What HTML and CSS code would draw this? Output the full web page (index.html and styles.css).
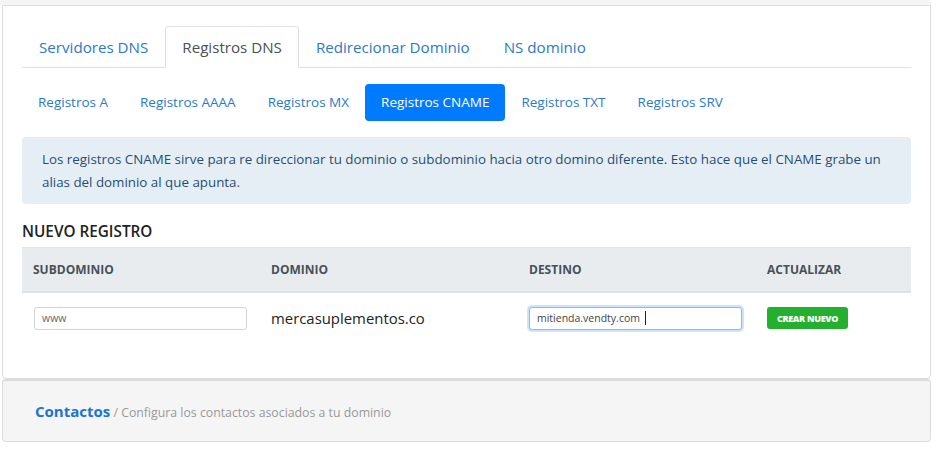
FILE: index.html
```html
<!DOCTYPE html>
<html lang="es">
<head>
<meta charset="utf-8">
<link rel="stylesheet" href="styles.css">
</head>
<body>
<div class="topstrip"></div>
<div class="card">
  <ul class="tabs">
    <li class="tab">Servidores DNS</li>
    <li class="tab active">Registros DNS</li>
    <li class="tab">Redirecionar Dominio</li>
    <li class="tab">NS dominio</li>
  </ul>
  <ul class="pills">
    <li class="pill">Registros A</li>
    <li class="pill">Registros AAAA</li>
    <li class="pill">Registros MX</li>
    <li class="pill active">Registros CNAME</li>
    <li class="pill">Registros TXT</li>
    <li class="pill">Registros SRV</li>
  </ul>
  <div class="alert">Los registros CNAME sirve para re direccionar tu dominio o subdominio hacia otro domino diferente. Esto hace que el CNAME grabe un alias del dominio al que apunta.</div>
  <h3 class="title">NUEVO REGISTRO</h3>
  <table class="grid">
    <thead>
      <tr><th class="c1">SUBDOMINIO</th><th class="c2">DOMINIO</th><th class="c3">DESTINO</th><th class="c4">ACTUALIZAR</th></tr>
    </thead>
    <tbody>
      <tr>
        <td><input class="field" type="text" value="www"></td>
        <td class="domain">mercasuplementos.co</td>
        <td><div class="field focus">mitienda.vendty.com <span class="caret"></span></div></td>
        <td><button class="btn">CREAR NUEVO</button></td>
      </tr>
    </tbody>
  </table>
</div>
<div class="card2">
  <span class="ctitle">Contactos</span><span class="csub"> / Configura los contactos asociados a tu dominio</span>
</div>
</body>
</html>
```
FILE: styles.css
```css
* { box-sizing: border-box; }
body {
  margin: 0;
  background: #fff;
  font-family: "Open Sans", "Noto Sans", sans-serif;
  color: #212529;
}
.topstrip {
  height: 5px;
  width: 931px;
  background: #f5f5f5;
}
.card {
  margin-left: 2px;
  width: 929px;
  height: 374px;
  border: 1px solid #dcdcdc;
  border-radius: 0 0 4px 4px;
  padding: 20px 19px 0 19px;
}
.tabs {
  list-style: none;
  margin: 0;
  padding: 0;
  display: flex;
  border-bottom: 1px solid #dee2e6;
  height: 42px;
}
.tab {
  font-size: 15.15px;
  color: #2a7ac9;
  padding: 0 16px;
  line-height: 41px;
  border: 1px solid transparent;
  border-radius: 4px 4px 0 0;
  margin-bottom: -1px;
  height: 42px;
}
.tab.active {
  color: #495057;
  background: #fff;
  border-color: #dee2e6 #dee2e6 #fff;
}
.pills {
  list-style: none;
  margin: 16px 0 0 0;
  padding: 0;
  display: flex;
  height: 37px;
}
.pill {
  font-size: 13.5px;
  color: #2a7ac9;
  padding: 0 16px;
  line-height: 37px;
  border-radius: 4px;
}
.pill.active {
  background: #007bff;
  color: #fff;
}
.alert {
  margin-top: 16px;
  background: #e6eef5;
  border-radius: 4px;
  color: #1f4f75;
  font-size: 13.35px;
  line-height: 22.5px;
  padding: 11px 20px 11px 20px;
}
.title {
  margin: 15px 0 0 0;
  font-size: 15.3px;
  font-weight: 600;
  color: #222;
  line-height: 24px;
}
.grid {
  width: 889px;
  border-collapse: collapse;
  margin-top: 4px;
}
.grid th {
  background: #e9ecef;
  text-align: left;
  font-size: 12px;
  font-weight: 700;
  color: #495057;
  height: 44px;
  padding: 0 11px;
  border-top: 1px solid #e2e5e8;
  border-bottom: 2px solid #dee2e6;
}
.c1 { width: 238px; }
.c2 { width: 258px; }
.c3 { width: 238px; }
.c4 { width: 155px; }
.grid td {
  padding: 0 11px;
  height: 52px;
  vertical-align: middle;
}
.field {
  display: block;
  width: 213px;
  height: 23px;
  border: 1px solid #ced4da;
  border-radius: 3px;
  font-family: "Open Sans", "Noto Sans", sans-serif;
  font-size: 10.5px;
  color: #666;
  padding: 0 7px;
  line-height: 21px;
  background: #fff;
}
.grid td:first-child .field { margin-left: 1px; }
.field.focus {
  color: #444;
  border-color: #80bdff;
  box-shadow: 0 0 0 2px rgba(0, 123, 255, 0.2);
}
.caret {
  display: inline-block;
  width: 1px;
  height: 14px;
  background: #222;
  vertical-align: -3px;
  margin-left: 2px;
}
.domain {
  font-size: 14.9px;
  color: #222;
}
.btn {
  display: block;
  background: #22b02e;
  color: #fff;
  border: none;
  border-radius: 3px;
  font-family: "Open Sans", "Noto Sans", sans-serif;
  font-weight: 800;
  font-size: 9px;
  height: 22px;
  width: 81px;
  padding: 0;
  letter-spacing: -0.3px;
}
.card2 {
  margin-left: 2px;
  width: 929px;
  height: 63px;
  margin-top: 0;
  background: #f5f5f5;
  border: 1px solid #dcdcdc;
  border-top: 2px solid #dcdcdc;
  border-radius: 4px;
  padding: 0 0 0 32px;
  line-height: 61px;
}
.ctitle {
  font-size: 15px;
  font-weight: 700;
  color: #1a73d6;
}
.csub {
  font-size: 12.3px;
  color: #999;
}
```
